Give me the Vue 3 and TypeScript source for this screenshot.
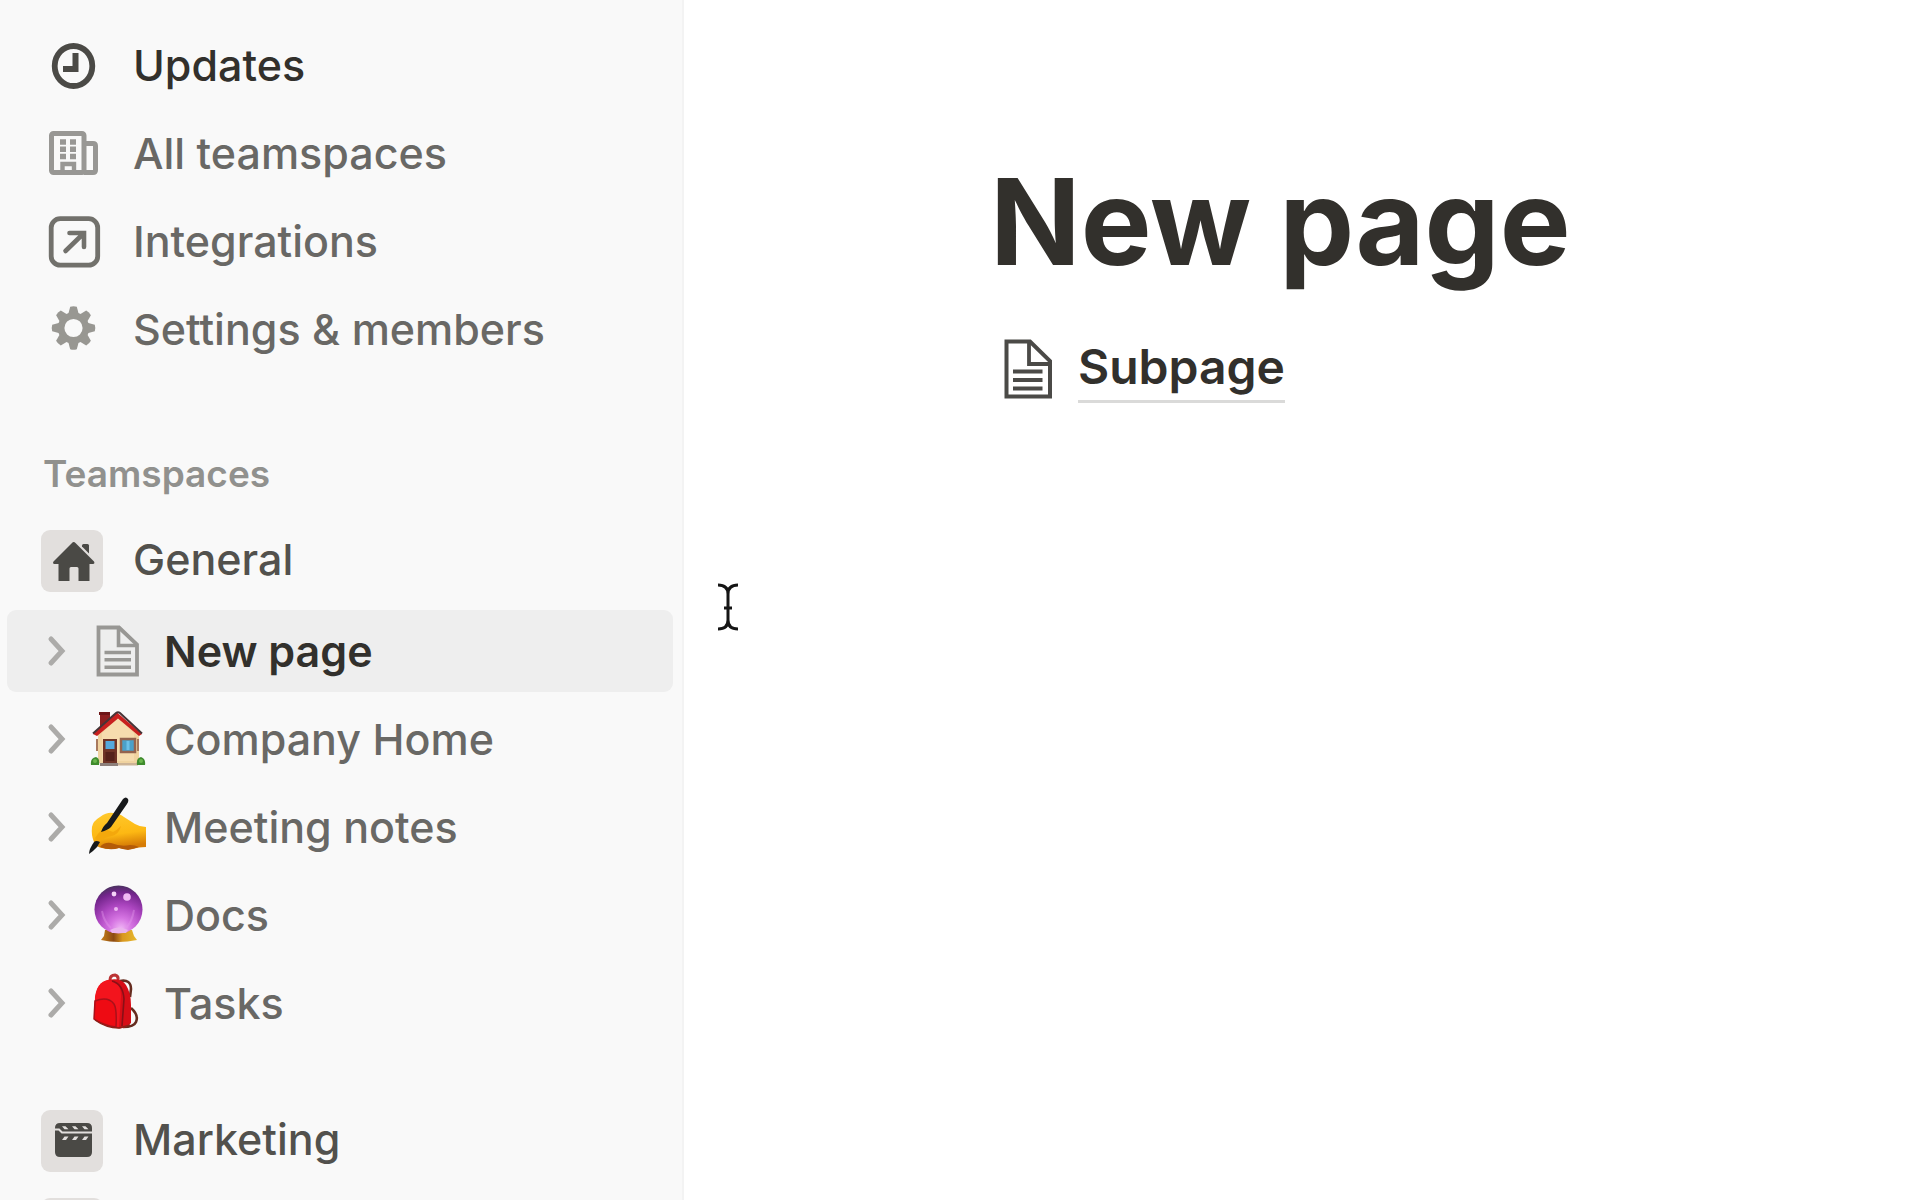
<script setup lang="ts">
import { ref } from 'vue'

interface NavItem {
  label: string
  icon: 'clock' | 'building' | 'arrow' | 'gear'
  strong?: boolean
}

interface PageItem {
  label: string
  icon: 'page' | 'house' | 'writing' | 'orb' | 'backpack'
}

const navItems: NavItem[] = [
  { label: 'Updates', icon: 'clock', strong: true },
  { label: 'All teamspaces', icon: 'building' },
  { label: 'Integrations', icon: 'arrow' },
  { label: 'Settings & members', icon: 'gear' },
]

const pages: PageItem[] = [
  { label: 'New page', icon: 'page' },
  { label: 'Company Home', icon: 'house' },
  { label: 'Meeting notes', icon: 'writing' },
  { label: 'Docs', icon: 'orb' },
  { label: 'Tasks', icon: 'backpack' },
]

const current = ref('New page')
const gearTeeth = [0, 45, 90, 135, 180, 225, 270, 315]
</script>

<template>
  <div class="app">
    <aside class="sidebar">
      <nav class="nav" aria-label="Workspace">
        <a v-for="item in navItems" :key="item.label" href="#" class="nav-row" :class="{ strong: item.strong }">
          <svg v-if="item.icon === 'clock'" class="icon dark" viewBox="0 0 60 60" aria-hidden="true">
            <ellipse cx="30.5" cy="31" rx="18.8" ry="20" stroke-width="5.8" />
            <path d="M32.5 18V34H20" stroke-width="6" />
          </svg>
          <svg v-else-if="item.icon === 'building'" class="icon light" viewBox="0 0 60 60" aria-hidden="true">
            <rect x="8.5" y="10.5" width="32.5" height="39" rx="2" stroke-width="5" />
            <path d="M43 20.5H50Q52.5 20.5 52.5 23V47Q52.5 49.5 50 49.5H41" stroke-width="5" />
            <path d="M17 19H23M27 19H33M17 26.3H23M27 26.3H33M17 33.5H23M27 33.5H33" stroke-width="5.4" />
            <path d="M19.5 49V41H31V49" stroke-width="4.4" />
          </svg>
          <svg v-else-if="item.icon === 'arrow'" class="icon mid" viewBox="0 0 60 60" aria-hidden="true">
            <rect x="8.2" y="7.7" width="46.5" height="46.5" rx="9" stroke-width="4.8" />
            <path d="M22.5 40L40.5 22.5M26.5 22H41V36" stroke-width="4.6" stroke-linecap="round" stroke-linejoin="miter" />
          </svg>
          <svg v-else class="icon gear" viewBox="0 0 60 60" aria-hidden="true">
            <g transform="translate(30.5 29)">
              <circle r="12.4" fill="none" stroke="currentColor" stroke-width="6.6" />
              <path
                v-for="angle in gearTeeth"
                :key="angle"
                d="M-5.5 -13L-3.3 -21.3Q0 -22.3 3.3 -21.3L5.5 -13Z"
                :transform="`rotate(${angle})`"
                fill="currentColor"
              />
            </g>
          </svg>
          <span>{{ item.label }}</span>
        </a>
      </nav>

      <section class="teamspaces">
        <h2 class="section-title">Teamspaces</h2>
        <a href="#" class="nav-row space">
          <svg class="badge" viewBox="0 0 62 62" aria-hidden="true">
            <path d="M32.7 12Q33.7 12 34.5 13L53 31.500Q54.2 33.5 52 34H48.5V51H37.5V38.500Q37.5 37 36 37H30Q28.5 37 28.5 38.500V51H17.5V34H13.500Q11.2 33.5 12.5 31.500L31 13Q31.7 12 32.7 12Z" />
            <path d="M41 15.5Q41 14 42.5 14H46.5Q48 14 48 15.500V23.500L41 16.500Z" />
          </svg>
          <span>General</span>
        </a>

        <ul class="pages">
          <li v-for="page in pages" :key="page.label" class="page-row" :class="{ active: page.label === current }">
            <button type="button" class="toggle" :aria-label="`Expand ${page.label}`">
              <svg viewBox="0 0 24 32" aria-hidden="true"><path d="M5 4L16 16L5 28" /></svg>
            </button>
            <a href="#" class="page-link" @click.prevent="current = page.label">
              <svg v-if="page.icon === 'page'" class="icon doc" viewBox="0 0 60 60" aria-hidden="true">
                <path d="M10.5 6.5H31L49 23.500V53.500H10.500Z" stroke-width="3.8" />
                <path d="M30.5 7V24.500H49" stroke-width="3.6" />
                <path d="M16.5 31.500H43M16.5 38.800H43M16.5 46.200H43" stroke-width="3.4" />
              </svg>
              <svg v-else-if="page.icon === 'house'" class="icon" viewBox="0 0 60 60" aria-hidden="true">
                <path d="M12 3H22V22L12 25Z" fill="#8d1f20" />
                <path d="M11 3H22V6H11Z" fill="#6d1517" />
                <path d="M10 24L30 7L51 24V54H10Z" fill="#f0d3a0" />
                <path d="M14 24L30 9L46 24V52H14Z" fill="#f6dcae" />
                <path d="M5 25L29 3.500L54 25L51 27L30 9.500L9 27Z" fill="#c8201f" />
                <path d="M5 24.500L28 4Q30 2.500 32 4L54 24.500" fill="none" stroke="#463437" stroke-width="2" />
                <path d="M9 30V42M50 30V42" stroke="#a8795d" stroke-width="2" />
                <rect x="15" y="30" width="14" height="24" fill="#6f3427" />
                <rect x="17.5" y="32" width="9" height="8" fill="#54a9dd" />
                <path d="M17.5 43H26.500V52H17.500Z" fill="#55221b" />
                <rect x="33" y="30" width="14" height="13" fill="#4ba0c9" stroke="#94634e" stroke-width="2.5" />
                <path d="M40 32V41" stroke="#6cc0e8" stroke-width="3" />
                <path d="M12 54H30V57H12Z" fill="#8d807b" />
                <path d="M30 54H50V56.500H30Z" fill="#cdb496" />
                <path d="M3 56Q2 49 8 48Q12 49 11 56Z" fill="#3f8b2d" />
                <path d="M49 56Q48 49 53 48Q58 50 57 56Z" fill="#3f8b2d" />
                <circle cx="7" cy="52" r="2" fill="#6bb64c" />
                <circle cx="53" cy="52" r="2" fill="#6bb64c" />
              </svg>
              <svg v-else-if="page.icon === 'writing'" class="icon" viewBox="0 0 60 60" aria-hidden="true">
                <defs>
                  <linearGradient id="skin" x1="0" y1="0" x2="0.2" y2="1">
                    <stop offset="0" stop-color="#ffca2e" />
                    <stop offset="0.65" stop-color="#fdb813" />
                    <stop offset="1" stop-color="#d67c06" />
                  </linearGradient>
                </defs>
                <path d="M4 30Q5 24 12 20Q19 15 25 16Q31 16 36 20L47 27Q52 30 58 30V50Q50 50 45 52Q38 53 31 51Q23 53 14 51Q8 50 6 45Q3 38 4 30Z" fill="url(#skin)" />
                <path d="M12 50Q16 45 23 46Q33 50 42 48Q47 48 51 50Q44 52 40 53Q34 52 31 51Q22 54 12 50Z" fill="#b45b08" />
                <path d="M7 41Q12 33 17 32L25 35Q29 33 33 29Q31 37 24 39Q17 40 11 45Z" fill="#f4a80c" />
                <path d="M35 2Q38 -1 40 2Q41 4 39 7L23 30Q20 33 13 35Q15 29 19 26Z" fill="#17191b" />
                <path d="M6 45Q8 43 12 45Q10 50 5 54L1 57Q1 52 6 45Z" fill="#17191b" />
              </svg>
              <svg v-else-if="page.icon === 'orb'" class="icon" viewBox="0 2 60 60" aria-hidden="true">
                <defs>
                  <radialGradient id="orb" cx="0.55" cy="0.9" r="0.9">
                    <stop offset="0" stop-color="#f0b5f5" />
                    <stop offset="0.25" stop-color="#d574e2" />
                    <stop offset="0.55" stop-color="#ab45bf" />
                    <stop offset="0.85" stop-color="#73258c" />
                    <stop offset="1" stop-color="#4b3260" />
                  </radialGradient>
                  <linearGradient id="brass">
                    <stop offset="0" stop-color="#c68019" />
                    <stop offset="0.35" stop-color="#8c4a12" />
                    <stop offset="0.6" stop-color="#d99820" />
                    <stop offset="1" stop-color="#e7b92d" />
                  </linearGradient>
                </defs>
                <path d="M17 47H44L46 53L49 57Q30 61 13 57L16 53Z" fill="url(#brass)" />
                <circle cx="30.5" cy="26.5" r="24" fill="url(#orb)" />
                <path d="M22 47Q30 42 40 47L38 50H24Z" fill="#eab5ed" />
                <path d="M14 28Q16 39 23 45M46 27Q44 39 38 45" fill="none" stroke="#e498ec" stroke-width="2" opacity="0.4" />
                <circle cx="26" cy="11" r="2.4" fill="#f5d4f8" />
                <circle cx="39" cy="14" r="3.8" fill="#f0b9f4" />
                <circle cx="28" cy="26" r="2" fill="#edb5f1" />
              </svg>
              <svg v-else class="icon" viewBox="0 0 60 60" aria-hidden="true">
                <path d="M32 8Q43 6 43 16L42 24M43 35Q51 42 48 49Q46 54 35 54" fill="none" stroke="#662d20" stroke-width="2.6" />
                <path d="M22 7Q22 2 27 2Q31 3 30 8" fill="none" stroke="#bb3435" stroke-width="3" />
                <path d="M7 27Q8 10 20 7Q33 4 38 12Q43 20 43 32L43 50Q37 57 28 55Q14 53 6 46Z" fill="#d70d16" />
                <path d="M7 24Q9 9 20 7Q33 8 33 23L31 54Q15 53 6 46Z" fill="#f3141d" />
                <path d="M24 8Q35 11 36 26L34 53" fill="none" stroke="#891017" stroke-width="1.6" />
                <path d="M7 28Q20 23 26 31Q29 36 28 54Q15 52 6 46Z" fill="#ee0b13" stroke="#a9111a" stroke-width="1.5" />
                <path d="M7 47Q18 55 31 55L42 52" fill="none" stroke="#8d2018" stroke-width="1.5" />
              </svg>
              <span>{{ page.label }}</span>
            </a>
          </li>
        </ul>

        <a href="#" class="nav-row space">
          <svg class="badge" viewBox="0 0 62 62" aria-hidden="true">
            <path d="M19 13H46Q51 13 51 18V42Q51 47 46 47H19Q14 47 14 42V18Q14 13 19 13Z" />
            <path class="cut" d="M14 19.500H18L21 22.500H51" />
            <path class="slot" d="M21 16.200H24.500L27.500 19.200H23.500ZM31 16.200H34.500L37.500 19.200H33.500ZM41 16.200H44.500L47.500 19.200H43.500ZM23.500 26.500H27.500L25 30H21ZM33.500 26.500H37.500L35 30H31ZM43.500 26.500H47.500L45 30H41Z" />
          </svg>
          <span>Marketing</span>
        </a>
        <div class="nav-row space" aria-hidden="true"><div class="badge"></div></div>
      </section>
    </aside>

    <main class="content">
      <h1 class="title">New page</h1>
      <a href="#" class="subpage">
        <svg viewBox="0 0 48 60" aria-hidden="true">
          <path d="M2.500 2.500H26L46 22V57.500H2.500Z" stroke-width="4" />
          <path d="M25 3V25H46" stroke-width="3.8" />
          <path d="M9 32.500H38.500M9 41H38.500M9 49.500H38.500" stroke-width="4" />
        </svg>
        <span>Subpage</span>
      </a>
      <svg class="cursor" viewBox="0 0 24 48" aria-hidden="true">
        <path d="M2 2Q12 2 12 11V37Q12 46 2 46M22 2Q12 2 12 11M12 37Q12 46 22 46M8 25H16" />
      </svg>
    </main>
  </div>
</template>

<style>
body {
  margin: 0;
}
</style>

<style scoped>
.app {
  display: flex;
  height: 100vh;
  overflow: hidden;
  background: #ffffff;
  color: #32302c;
  font-family: Inter, "Liberation Sans", sans-serif;
}

a {
  color: inherit;
  text-decoration: none;
}

.sidebar {
  flex: none;
  box-sizing: border-box;
  width: 684px;
  padding-top: 21px;
  overflow: hidden;
  background: #f9f9f9;
  border-right: 2px solid #f3f3f3;
}

.nav-row {
  display: flex;
  align-items: center;
  gap: 30px;
  height: 88px;
  padding-left: 43px;
  color: #696865;
  font-size: 43px;
  font-weight: 500;
  white-space: nowrap;
}

.nav-row.strong {
  color: #32302c;
}

.nav-row.space {
  padding-left: 41px;
  color: #52514d;
}

.nav-row.space span {
  padding-bottom: 4px;
}

.icon {
  flex: none;
  width: 60px;
  height: 60px;
}

.dark,
.mid,
.light,
.doc {
  fill: none;
  stroke: #4b4a46;
}

.mid {
  stroke: #72716c;
}

.light,
.doc {
  stroke: #989794;
}

.gear {
  color: #989792;
}

.section-title {
  margin: 69px 0 11px;
  padding-left: 43px;
  color: #91918e;
  font-size: 37px;
  font-weight: 600;
  line-height: 64px;
}

.badge {
  flex: none;
  width: 62px;
  height: 62px;
  border-radius: 9px;
  background: #e2dfdd;
  fill: #4a4945;
}

.cut {
  fill: none;
  stroke: #e2dfdd;
  stroke-width: 2px;
}

.slot {
  fill: #e2dfdd;
}

.pages {
  display: flex;
  flex-direction: column;
  gap: 6px;
  margin: 5px 9px 53px 7px;
  padding: 0;
  list-style: none;
}

.page-row {
  display: flex;
  align-items: center;
  height: 82px;
  padding-left: 39px;
  border-radius: 9px;
  color: #696865;
  font-size: 43px;
  font-weight: 500;
  white-space: nowrap;
}

.page-row.active {
  background: #eeeeee;
  color: #32302c;
  font-weight: 600;
}

.toggle {
  width: 42px;
  height: 44px;
  padding: 6px 0;
  border: 0;
  background: none;
  text-align: left;
}

.toggle svg {
  display: block;
  width: 24px;
  height: 32px;
  fill: none;
  stroke: #acaba9;
  stroke-width: 5px;
  stroke-linecap: round;
}

.page-link {
  display: flex;
  flex: 1;
  align-items: center;
  gap: 16px;
}

.content {
  position: relative;
  flex: 1;
  min-width: 0;
  padding: 148px 64px 0 306px;
}

.title {
  margin: 0;
  font-size: 119px;
  font-weight: 700;
  line-height: 148px;
}

.subpage {
  display: inline-flex;
  align-items: center;
  gap: 26px;
  margin: 38px 0 0 14px;
  font-size: 48px;
  font-weight: 600;
}

.subpage svg {
  width: 48px;
  height: 60px;
  fill: none;
  stroke: #4b4a47;
}

.subpage span {
  border-bottom: 3px solid #dadad9;
  line-height: 66px;
}

.cursor {
  position: absolute;
  top: 583px;
  left: 32px;
  width: 24px;
  height: 48px;
  fill: none;
  stroke: #151515;
  stroke-width: 3px;
}
</style>
